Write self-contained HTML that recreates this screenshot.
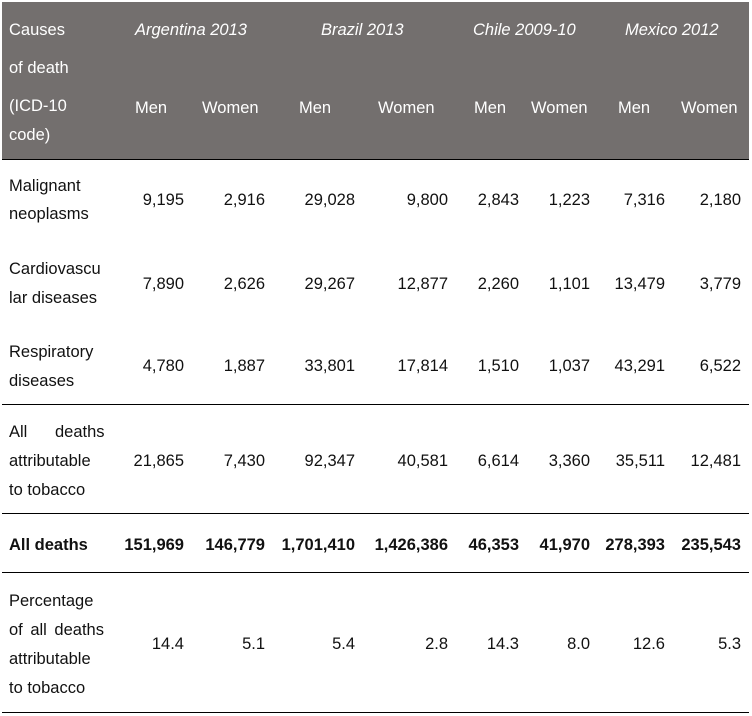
<!DOCTYPE html>
<html><head><style>
body{margin:0;width:752px;height:716px;background:#fff;position:relative;overflow:hidden;font-family:"Liberation Sans",Arial,sans-serif;font-size:16.5px;color:#111;}
div{position:absolute;white-space:nowrap;line-height:20px;height:20px;margin-top:2px}
.h{color:#fff}
.i{font-style:italic}
.b{font-weight:bold}
.ln{height:0;border-top:1.5px solid #000;left:2px;width:747px;margin-top:0}
.r{text-align:right;width:120px}
</style></head><body>
<div style="left:2px;top:2px;width:747px;height:157px;background:#736f6e;margin-top:0"></div>
<div class="ln" style="top:159px"></div>
<div class="ln" style="top:404px;border-top-width:1px"></div>
<div class="ln" style="top:513px;border-top-width:1px"></div>
<div class="ln" style="top:572px;border-top-width:1px"></div>
<div class="ln" style="top:712px;border-top-width:1px"></div>

<div class="h" style="left:9px;top:18px">Causes</div>
<div class="h" style="left:9px;top:56px">of death</div>
<div class="h" style="left:9px;top:94px">(ICD-10</div>
<div class="h" style="left:9px;top:123px">code)</div>
<div class="h i" style="left:135px;top:18px">Argentina 2013</div>
<div class="h i" style="left:321px;top:18px">Brazil 2013</div>
<div class="h i" style="left:473px;top:18px">Chile 2009-10</div>
<div class="h i" style="left:625px;top:18px">Mexico 2012</div>
<div class="h" style="left:135px;top:96px">Men</div>
<div class="h" style="left:202px;top:96px">Women</div>
<div class="h" style="left:299px;top:96px">Men</div>
<div class="h" style="left:378px;top:96px">Women</div>
<div class="h" style="left:474px;top:96px">Men</div>
<div class="h" style="left:531px;top:96px">Women</div>
<div class="h" style="left:618px;top:96px">Men</div>
<div class="h" style="left:681px;top:96px">Women</div>

<div style="left:9px;top:174px">Malignant</div>
<div style="left:9px;top:202px">neoplasms</div>
<div style="left:9px;top:257px">Cardiovascu</div>
<div style="left:9px;top:286px">lar diseases</div>
<div style="left:9px;top:340px">Respiratory</div>
<div style="left:9px;top:369px">diseases</div>
<div style="left:9px;top:420px">All</div>
<div style="left:55px;top:420px">deaths</div>
<div style="left:9px;top:449px">attributable</div>
<div style="left:9px;top:478px">to tobacco</div>
<div class="b" style="left:9px;top:533px">All deaths</div>
<div style="left:9px;top:589px">Percentage</div>
<div style="left:9px;top:618px;word-spacing:3px">of all deaths</div>
<div style="left:9px;top:647px">attributable</div>
<div style="left:9px;top:676px">to tobacco</div>

<div class="r" style="left:64px;top:188px">9,195</div>
<div class="r" style="left:145px;top:188px">2,916</div>
<div class="r" style="left:235px;top:188px">29,028</div>
<div class="r" style="left:328px;top:188px">9,800</div>
<div class="r" style="left:399px;top:188px">2,843</div>
<div class="r" style="left:470px;top:188px">1,223</div>
<div class="r" style="left:545px;top:188px">7,316</div>
<div class="r" style="left:621px;top:188px">2,180</div>

<div class="r" style="left:64px;top:272px">7,890</div>
<div class="r" style="left:145px;top:272px">2,626</div>
<div class="r" style="left:235px;top:272px">29,267</div>
<div class="r" style="left:328px;top:272px">12,877</div>
<div class="r" style="left:399px;top:272px">2,260</div>
<div class="r" style="left:470px;top:272px">1,101</div>
<div class="r" style="left:545px;top:272px">13,479</div>
<div class="r" style="left:621px;top:272px">3,779</div>

<div class="r" style="left:64px;top:354px">4,780</div>
<div class="r" style="left:145px;top:354px">1,887</div>
<div class="r" style="left:235px;top:354px">33,801</div>
<div class="r" style="left:328px;top:354px">17,814</div>
<div class="r" style="left:399px;top:354px">1,510</div>
<div class="r" style="left:470px;top:354px">1,037</div>
<div class="r" style="left:545px;top:354px">43,291</div>
<div class="r" style="left:621px;top:354px">6,522</div>

<div class="r" style="left:64px;top:449px">21,865</div>
<div class="r" style="left:145px;top:449px">7,430</div>
<div class="r" style="left:235px;top:449px">92,347</div>
<div class="r" style="left:328px;top:449px">40,581</div>
<div class="r" style="left:399px;top:449px">6,614</div>
<div class="r" style="left:470px;top:449px">3,360</div>
<div class="r" style="left:545px;top:449px">35,511</div>
<div class="r" style="left:621px;top:449px">12,481</div>

<div class="r b" style="left:64px;top:533px">151,969</div>
<div class="r b" style="left:145px;top:533px">146,779</div>
<div class="r b" style="left:235px;top:533px">1,701,410</div>
<div class="r b" style="left:328px;top:533px">1,426,386</div>
<div class="r b" style="left:399px;top:533px">46,353</div>
<div class="r b" style="left:470px;top:533px">41,970</div>
<div class="r b" style="left:545px;top:533px">278,393</div>
<div class="r b" style="left:621px;top:533px">235,543</div>

<div class="r" style="left:64px;top:632px">14.4</div>
<div class="r" style="left:145px;top:632px">5.1</div>
<div class="r" style="left:235px;top:632px">5.4</div>
<div class="r" style="left:328px;top:632px">2.8</div>
<div class="r" style="left:399px;top:632px">14.3</div>
<div class="r" style="left:470px;top:632px">8.0</div>
<div class="r" style="left:545px;top:632px">12.6</div>
<div class="r" style="left:621px;top:632px">5.3</div>
</body></html>
